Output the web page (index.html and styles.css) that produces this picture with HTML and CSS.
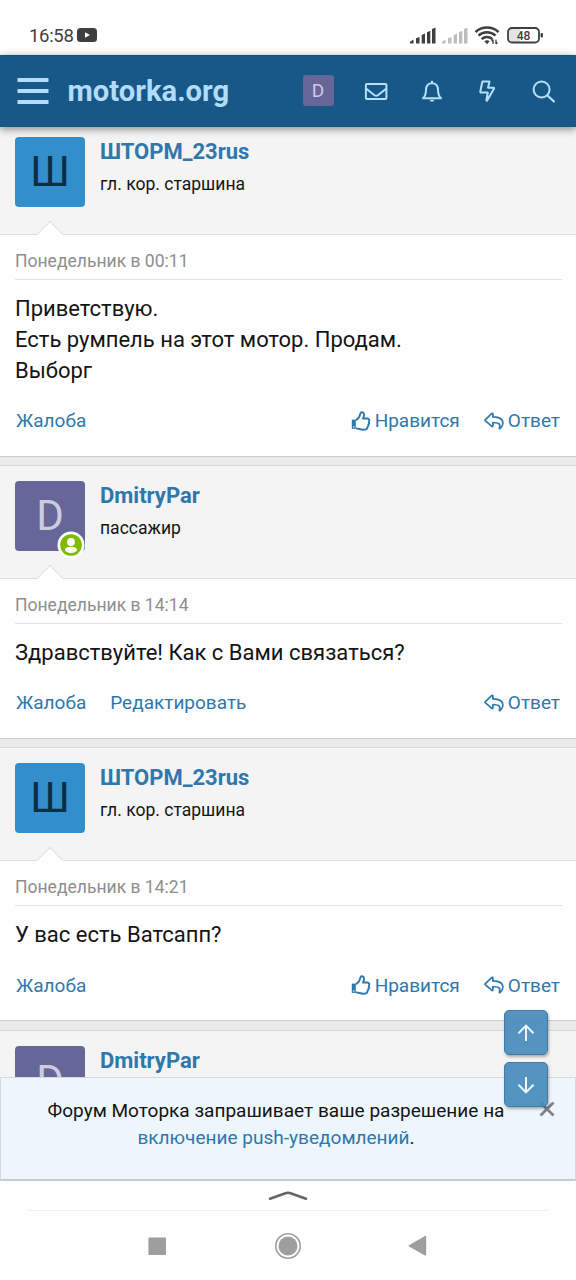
FILE: index.html
```html
<!DOCTYPE html>
<html lang="ru">
<head>
<meta charset="utf-8">
<title>motorka.org</title>
<link rel="stylesheet" href="styles.css">
</head>
<body>
<svg class="defs" width="0" height="0" aria-hidden="true">
  <symbol id="like" viewBox="0 0 20 20">
    <path d="M.8 8.600h4v9.300h-4z" fill="currentColor"/><circle cx="2.800" cy="16" r=".8" fill="#fefefe"/>
    <path d="M5 9.200 7.800 6.500C9.200 5 9 2 10.100 1.400c1.500-.8 3.100.7 3 2.500 0 1.400-.9 2.400-1.100 3.600h4.200c2 0 2.700 2.100 1.500 3.300.7 1 .5 2.100-.4 2.800.2 1-.1 1.800-.8 2.300 0 2.400-1.600 2.800-4.200 2.800-2.900 0-4.600-1.300-7.300-1.300" fill="none" stroke="currentColor" stroke-width="1.900" stroke-linejoin="round"/>
  </symbol>
  <symbol id="reply" viewBox="0 0 20 20">
    <path d="M1.200 8.800 7.600 2.600c.6-.6 1.300-.3 1.300.5v2.800c6 .1 10 1.500 10 6.200 0 2.300-1.200 4.100-2.800 5.400-.4.300-.9 0-.7-.6 1.500-4.100-.8-5.300-6.500-5.400v3.200c0 .8-.7 1.100-1.300.5L1.200 9.600c-.3-.3-.3-.5 0-.8z" fill="none" stroke="currentColor" stroke-width="1.700" stroke-linejoin="round"/>
  </symbol>
</svg>
<div class="phone">
  <div class="status">
    <span class="clock">16:58</span>
    <svg class="video" width="20" height="14" viewBox="0 0 20 14"><rect width="20" height="14" rx="3.500" fill="#3f3f3f"/><path d="M8 4.200v5.600L13 7z" fill="#fff"/></svg>
    <svg class="signals" width="135" height="20" viewBox="0 0 135 20">
      <g fill="#3f3f3f"><path d="M0 17.500v-1.800l3.500-2.200v4zM6 17.500v-5.300l3.500-1.300v6.600zM11.700 17.500V9l3.300-1.500v10zM17 17.500V6.200l3.300-1.500v12.800zM22 17.500V3l3.500-1.500v16z"/></g>
      <g fill="#bdbdbd"><path d="M32 17.500v-1.800l3.500-2.200v4zM38 17.500v-5.300l3.500-1.300v6.600zM43.700 17.500V9l3.300-1.500v10zM49 17.500V6.200l3.300-1.500v12.800zM54 17.500V3l3.500-1.500v16z"/></g>
      <g fill="none" stroke="#3f3f3f" stroke-width="2.500"><path d="M65.500 6a17 17 0 0 1 23 0M68.500 9.600a12.500 12.500 0 0 1 17 0M71.600 13.200a8 8 0 0 1 10.800 0"/></g>
      <path d="m77 18.200-2.600-2.900c1.200-1.300 4-1.300 5.200 0z" fill="#3f3f3f"/>
      <path d="M83 18v-4.500M81.600 15l1.400-1.700M86 13.500V18M87.400 16.300 86 18" fill="none" stroke="#3f3f3f" stroke-width="1.300"/>
      <path d="M99 3h11v13H99z" fill="#e3e3e3"/>
      <rect x="98" y="2" width="31" height="14.500" rx="4" fill="none" stroke="#3f3f3f" stroke-width="1.800"/>
      <rect x="130.600" y="7" width="2.400" height="4.500" rx="1" fill="#3f3f3f"/>
      <text class="battery" x="113.500" y="13.500" text-anchor="middle">48</text>
    </svg>
  </div>
  <header class="header">
    <svg class="menu" width="32" height="26" viewBox="0 0 32 26"><path d="M.5 2h31M.5 13h31M.5 24h31" stroke="#b3dcfc" stroke-width="3.800"/></svg>
    <span class="logo">motorka.org</span>
    <span class="me">D</span>
    <svg class="tools" width="192" height="28" viewBox="0 0 192 28" fill="none" stroke="#b3e0fe" stroke-width="2" stroke-linejoin="round">
      <rect x="2.900" y="6.900" width="20.500" height="15" rx="1"/><path d="m3 11.500 8.200 6.500q2 1.400 4 0l8.200-6.500"/>
      <path d="M60 21.300c2.700-2.400 3-4.800 3-8.500 0-4 2.400-6.600 6-6.600s6 2.600 6 6.600c0 3.700.3 6.100 3 8.500zM69 6V3.700"/><path d="M66.600 22.800h4.800q-.5 2-2.400 2t-2.400-2z" fill="#b3e0fe" stroke="none"/>
      <path d="M119.400 4.500h7.100l-1.400 6.200h5.400q1 0 .5 1l-6.900 11.800q-.6.6-.7-.3l1.400-7.700h-6.600q-1 0-.9-1z"/>
      <circle cx="178.600" cy="12.500" r="8"/><path d="m184.500 18.500 7 6.500" stroke-width="2.200"/>
    </svg>
  </header>
  <main class="thread">
    <article class="post">
      <div class="user"><div class="avatar blue">Ш</div><div class="who"><a class="name">ШТОРМ_23rus</a><span class="rank">гл. кор. старшина</span></div><i class="notch"></i></div>
      <div class="date">Понедельник в 00:11</div>
      <p class="message">Приветствую.<br>Есть румпель на этот мотор. Продам.<br>Выборг</p>
      <div class="actions"><a>Жалоба</a><a class="right"><svg class="icon"><use href="#like"/></svg>Нравится</a><a><svg class="icon"><use href="#reply"/></svg>Ответ</a></div>
    </article>
    <article class="post">
      <div class="user"><div class="avatar violet">D<svg class="online" width="28" height="28" viewBox="0 0 28 28"><circle cx="14" cy="14" r="13.500" fill="#fefefe"/><circle cx="14" cy="14" r="10.800" fill="#7fb900"/><circle cx="14" cy="11" r="3.900" fill="#fefefe"/><ellipse cx="14" cy="18.800" rx="6" ry="3.100" fill="#fefefe"/></svg></div><div class="who"><a class="name">DmitryPar</a><span class="rank">пассажир</span></div><i class="notch"></i></div>
      <div class="date">Понедельник в 14:14</div>
      <p class="message">Здравствуйте! Как с Вами связаться?</p>
      <div class="actions"><a>Жалоба</a><a>Редактировать</a><a class="right"><svg class="icon"><use href="#reply"/></svg>Ответ</a></div>
    </article>
    <article class="post">
      <div class="user"><div class="avatar blue">Ш</div><div class="who"><a class="name">ШТОРМ_23rus</a><span class="rank">гл. кор. старшина</span></div><i class="notch"></i></div>
      <div class="date">Понедельник в 14:21</div>
      <p class="message">У вас есть Ватсапп?</p>
      <div class="actions"><a>Жалоба</a><a class="right"><svg class="icon"><use href="#like"/></svg>Нравится</a><a><svg class="icon"><use href="#reply"/></svg>Ответ</a></div>
    </article>
    <article class="post">
      <div class="user"><div class="avatar violet">D</div><div class="who"><a class="name">DmitryPar</a></div></div>
    </article>
    <div class="notice">
      <p class="ask">Форум Моторка запрашивает ваше разрешение на <a>включение push-уведомлений</a>.</p>
      <svg class="close" width="16" height="16" viewBox="0 0 16 16"><path d="m1.500 1.500 13 13m0-13-13 13" stroke="#7d8287" stroke-width="2.800"/></svg>
    </div>
    <div class="scroll">
      <div class="jump"><svg width="20" height="20" viewBox="0 0 20 20"><path d="M10 18V3M2.500 10.200 10 2.600l7.500 7.600"/></svg></div>
      <div class="jump"><svg width="20" height="20" viewBox="0 0 20 20"><path d="M10 2v15M2.500 9.800l7.500 7.600 7.500-7.600"/></svg></div>
    </div>
  </main>
  <footer class="nav">
    <svg class="handle" width="40" height="12" viewBox="0 0 40 12"><path d="m2 9.800 15.500-5.500q2.500-.9 5 0L38 9.800" fill="none" stroke="#666" stroke-width="2.500" stroke-linecap="round"/></svg>
    <div class="keys">
      <svg width="28" height="28" viewBox="0 0 28 28"><rect x="5.400" y="5.500" width="17.600" height="17.400" rx="1" fill="#9e9e9e"/></svg>
      <svg width="28" height="28" viewBox="0 0 28 28"><circle cx="14" cy="14" r="12.200" fill="none" stroke="#9e9e9e" stroke-width="1.600"/><circle cx="14" cy="14" r="9.500" fill="#9e9e9e"/></svg>
      <svg width="28" height="28" viewBox="0 0 28 28"><path d="m4 13.300 16-9.300q1.200-.5 1.200.8v18q0 1.200-1.200.6L4 14.500q-.9-.6 0-1.200z" fill="#9e9e9e"/></svg>
    </div>
  </footer>
</div>
</body>
</html>
```
FILE: styles.css
```css
* { box-sizing: border-box; }
body { margin: 0; background: #fefefe; font-family: Roboto, "Noto Sans", sans-serif; color: #141414; }
p { margin: 0; }
.defs { position: absolute; }
.phone { display: flex; flex-direction: column; width: 576px; height: 1280px; overflow: hidden; }

.status { flex: none; display: flex; align-items: center; height: 55px; padding: 17px 31px 0 29px; background: #fff; }
.clock { font-size: 18.500px; line-height: 20px; color: #3f3f3f; letter-spacing: -0.300px; }
.video { margin: -2px 0 0 3.500px; }
.signals { margin-left: auto; margin-top: -1px; }
.battery { font-size: 12px; font-weight: 500; fill: #3f3f3f; }

.header { flex: none; position: relative; z-index: 1; display: flex; align-items: center; height: 72px; padding: 0 21.500px 2px 17px; background: #185886; border-top: 1px solid #204b6b; box-shadow: 0 2px 8px rgba(0, 0, 0, .45); }
.logo { margin-left: 18.500px; font-size: 29.200px; font-weight: 700; line-height: 36px; color: #b3dcfc; }
.me { width: 31px; height: 31px; margin: 0 29px 0 auto; border-radius: 3px; background: #666699; color: #ccccdf; font-size: 19px; line-height: 31px; text-align: center; }

.thread { flex: none; position: relative; height: 1054px; overflow: hidden; background: #ebebeb; }
.post { height: 274px; margin-bottom: 8.300px; border-top: 1px solid #d8d8d8; border-bottom: 1px solid #cbcbcb; background: #fefefe; }
.post:first-child { height: 335.700px; margin-top: -6px; }
.user { position: relative; display: flex; gap: 15px; height: 113px; padding: 15px; background: #f4f4f4; border-bottom: 1px solid #dedede; }
.avatar { position: relative; width: 70px; height: 70px; border-radius: 4px; font-size: 42px; line-height: 69px; text-align: center; }
.blue { background: #338fcc; color: #0a2e44; }
.violet { background: #666699; color: #ccccdf; }
.online { position: absolute; right: 0; bottom: -8px; }
.who { display: flex; flex-direction: column; }
.name { font-size: 22px; font-weight: 700; line-height: 30px; color: #2e78ac; }
.rank { margin-top: 4px; font-size: 17.550px; line-height: 26px; }
.notch { position: absolute; left: 40px; bottom: -11px; width: 20px; height: 20px; transform: rotate(45deg); background: #fefefe; border: 1px solid #dedede; border-right-color: transparent; border-bottom-color: transparent; }
.date { position: relative; height: 45px; margin: 0 14px 0 15px; padding-top: 13px; border-bottom: 1px solid #e2e2e2; font-size: 17.550px; line-height: 26px; color: #8e8e8e; }
.message { padding: 14px 15px 20px; font-size: 22px; line-height: 30.900px; }
.actions { display: flex; align-items: center; gap: 24px; height: 28px; padding: 0 16px; font-size: 19px; color: #2e78ac; }
.actions a { display: flex; align-items: center; gap: 4px; }
.right { margin-left: auto; }
.icon { width: 20px; height: 20px; }

.notice { position: absolute; left: 0; right: 0; bottom: 0; height: 104px; padding: 19px 69px 0 45px; background: #edf6fd; border: 1px solid #d4dbe0; border-bottom: 2px solid #c6ced4; text-align: center; }
.ask { margin: 0 -10px; font-size: 19.050px; line-height: 27px; }
.ask a { color: #2e78ac; }
.close { position: absolute; right: 20px; top: 23px; }
.scroll { position: absolute; right: 28.500px; bottom: 74px; display: grid; gap: 7px; }
.jump { display: grid; place-items: center; width: 43.500px; height: 45px; border: 1px solid #3d7ba9; border-radius: 5px; background: rgba(71, 139, 188, .92); box-shadow: 1px 2px 3px rgba(0, 0, 0, .3); }
.jump svg { fill: none; stroke: #edf6fd; stroke-width: 2; }

.nav { flex: none; height: 99px; padding: 8px 28px 0; background: #fefefe; text-align: center; }
.handle { display: block; margin: 0 auto; }
.keys { display: flex; justify-content: space-between; margin-top: 9px; padding: 20.500px 115px 0; border-top: 1px solid #f0f0f0; }
```
